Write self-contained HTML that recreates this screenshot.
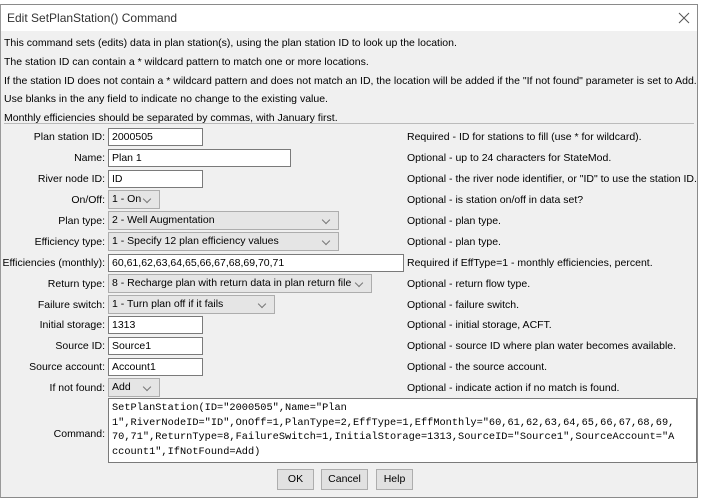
<!DOCTYPE html>
<html><head><style>
body{margin:0;width:702px;height:501px;background:#fff;position:relative;overflow:hidden;font-family:"Liberation Sans",sans-serif;font-size:10.5px;color:#000}
.win{position:absolute;left:0;top:4px;width:698px;height:494px;border:1px solid #8a8a8a;border-left:1px solid #999;background:#f0f0f0;box-sizing:border-box;overflow:hidden}
.title{position:absolute;left:0;top:0;right:0;height:26px;background:#fff}
.t{position:absolute;white-space:nowrap;line-height:14px}
.lab{position:absolute;right:592px;white-space:nowrap;line-height:14px;text-align:right}
.f{position:absolute;height:18px;background:#fff;border:1px solid #7a7a7a;box-sizing:border-box;padding-left:3px;line-height:16px;white-space:nowrap;overflow:hidden}
.c{position:absolute;height:19px;background:#e5e5e5;border:1px solid #adadad;box-sizing:border-box;padding-left:3px;line-height:17px;white-space:nowrap;overflow:hidden}
.c::after{content:"";position:absolute;right:9px;top:5px;width:5px;height:5px;border-right:1px solid #777;border-bottom:1px solid #777;transform:rotate(45deg)}
.b{position:absolute;top:464px;height:21px;background:#e1e1e1;border:1px solid #adadad;box-sizing:border-box;text-align:center;line-height:19px}
</style></head><body>
<div class="win">
<div class="title"></div>
<div class="t" style="left:6px;top:6px;font-size:12px;color:#333">Edit SetPlanStation() Command</div>
<svg style="position:absolute;left:677px;top:7px" width="12" height="12"><path d="M1 1L11 11M11 1L1 11" stroke="#555" stroke-width="1"/></svg>
<div class="t" style="left:3px;top:31px">This command sets (edits) data in plan station(s), using the plan station ID to look up the location.</div>
<div class="t" style="left:3px;top:50px">The station ID can contain a * wildcard pattern to match one or more locations.</div>
<div class="t" style="left:3px;top:69px">If the station ID does not contain a * wildcard pattern and does not match an ID, the location will be added if the "If not found" parameter is set to Add.</div>
<div class="t" style="left:3px;top:87px">Use blanks in the any field to indicate no change to the existing value.</div>
<div class="t" style="left:3px;top:106px">Monthly efficiencies should be separated by commas, with January first.</div>
<div style="position:absolute;left:3px;right:3px;top:118px;border-top:1px solid #bbb"></div>

<div class="lab" style="top:125px">Plan station ID:</div><div class="f" style="left:107px;top:123px;width:95px">2000505</div>
<div class="t" style="left:406px;top:125px">Required - ID for stations to fill (use * for wildcard).</div>
<div class="lab" style="top:146px">Name:</div><div class="f" style="left:107px;top:144px;width:183px">Plan 1</div>
<div class="t" style="left:406px;top:146px">Optional - up to 24 characters for StateMod.</div>
<div class="lab" style="top:167px">River node ID:</div><div class="f" style="left:107px;top:165px;width:95px">ID</div>
<div class="t" style="left:406px;top:167px">Optional - the river node identifier, or "ID" to use the station ID.</div>
<div class="lab" style="top:188px">On/Off:</div><div class="c" style="left:107px;top:185px;width:52px">1 - On</div>
<div class="t" style="left:406px;top:188px">Optional - is station on/off in data set?</div>
<div class="lab" style="top:209px">Plan type:</div><div class="c" style="left:107px;top:206px;width:231px">2 - Well Augmentation</div>
<div class="t" style="left:406px;top:209px">Optional - plan type.</div>
<div class="lab" style="top:230px">Efficiency type:</div><div class="c" style="left:107px;top:227px;width:231px">1 - Specify 12 plan efficiency values</div>
<div class="t" style="left:406px;top:230px">Optional - plan type.</div>
<div class="lab" style="top:251px">Efficiencies (monthly):</div><div class="f" style="left:107px;top:249px;width:296px">60,61,62,63,64,65,66,67,68,69,70,71</div>
<div class="t" style="left:406px;top:251px">Required if EffType=1 - monthly efficiencies, percent.</div>
<div class="lab" style="top:272px">Return type:</div><div class="c" style="left:107px;top:269px;width:264px;padding-right:22px">8 - Recharge plan with return data in plan return file</div>
<div class="t" style="left:406px;top:272px">Optional - return flow type.</div>
<div class="lab" style="top:293px">Failure switch:</div><div class="c" style="left:107px;top:290px;width:167px">1 - Turn plan off if it fails</div>
<div class="t" style="left:406px;top:293px">Optional - failure switch.</div>
<div class="lab" style="top:313px">Initial storage:</div><div class="f" style="left:107px;top:311px;width:95px">1313</div>
<div class="t" style="left:406px;top:313px">Optional - initial storage, ACFT.</div>
<div class="lab" style="top:334px">Source ID:</div><div class="f" style="left:107px;top:332px;width:95px">Source1</div>
<div class="t" style="left:406px;top:334px">Optional - source ID where plan water becomes available.</div>
<div class="lab" style="top:355px">Source account:</div><div class="f" style="left:107px;top:353px;width:95px">Account1</div>
<div class="t" style="left:406px;top:355px">Optional - the source account.</div>
<div class="lab" style="top:376px">If not found:</div><div class="c" style="left:107px;top:373px;width:52px">Add</div>
<div class="t" style="left:406px;top:376px">Optional - indicate action if no match is found.</div>
<div class="lab" style="top:422px">Command:</div>
<div style="position:absolute;left:107px;top:393px;width:589px;height:65px;background:#fff;border:1px solid #7a7a7a;box-sizing:border-box;padding:2px 3px;font-family:'Liberation Mono',monospace;font-size:10.3px;line-height:14.5px;white-space:nowrap;overflow:hidden">SetPlanStation(ID="2000505",Name="Plan<br>1",RiverNodeID="ID",OnOff=1,PlanType=2,EffType=1,EffMonthly="60,61,62,63,64,65,66,67,68,69,<br>70,71",ReturnType=8,FailureSwitch=1,InitialStorage=1313,SourceID="Source1",SourceAccount="A<br>ccount1",IfNotFound=Add)</div>
<div class="b" style="left:276px;width:37px">OK</div>
<div class="b" style="left:320px;width:47px">Cancel</div>
<div class="b" style="left:375px;width:37px">Help</div>
</div>
</body></html>
